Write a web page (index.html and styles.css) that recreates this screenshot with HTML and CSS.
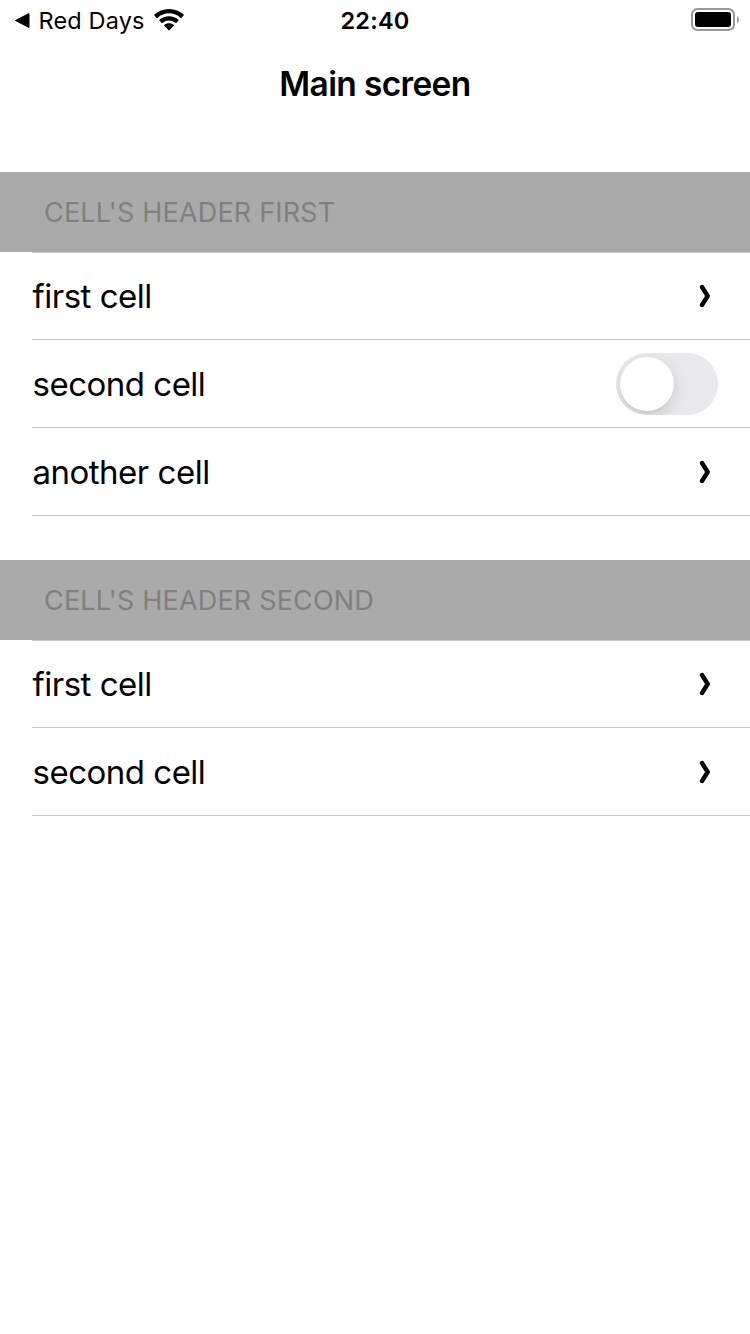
FILE: index.html
```html
<!DOCTYPE html>
<html lang="en">
<head>
<meta charset="utf-8">
<title>Main screen</title>
<link rel="stylesheet" href="styles.css">
</head>
<body>
<header class="status">
  <div class="status-left">
    <svg class="back" width="16" height="16" viewBox="0 0 16 16"><path d="M1.500 8.500 15 1.500v14z" stroke="#000" stroke-linejoin="round"/></svg>
    <span class="app">Red Days</span>
    <svg class="wifi" width="30" height="22" viewBox="0 0 30 22"><path d="M15 0C9.300 0 4.200 2.100 .4 5.600Q0 6 .4 6.400L2.600 8.900Q3 9.300 3.400 8.900A17 17 0 0 1 26.600 8.900Q27 9.300 27.400 8.900L29.600 6.400Q30 6 29.600 5.600C25.800 2.100 20.700 0 15 0zM15 7.200C11.400 7.200 8.100 8.500 5.500 10.700Q5.100 11.100 5.500 11.500L7.700 13.900Q8.100 14.300 8.500 13.900A10 10 0 0 1 21.500 13.900Q21.900 14.300 22.300 13.900L24.500 11.500Q24.900 11.100 24.500 10.700C21.900 8.500 18.600 7.200 15 7.200zM15 14.300C13.200 14.300 11.500 14.900 10.200 15.900Q9.800 16.300 10.200 16.700L14.600 21.300Q15 21.700 15.400 21.300L19.800 16.700Q20.200 16.300 19.800 15.900C18.500 14.900 16.800 14.300 15 14.300z"/></svg>
  </div>
  <span class="time">22:40</span>
  <div class="status-right">
    <svg width="48" height="24" viewBox="0 0 48 24"><rect x="1" y="1" width="42" height="21" rx="5.500" fill="none" stroke="#999" stroke-width="2"/><rect x="4" y="4" width="36" height="15" rx="3"/><path d="M46 8c2.600 1.400 2.600 6 0 7.400z" fill="#999"/></svg>
  </div>
</header>
<h1 class="title">Main screen</h1>
<main class="list">
  <section class="group">
    <h2 class="group-header">CELL'S HEADER FIRST</h2>
    <div class="cell"><span class="label">first cell</span><svg class="chevron" width="12" height="24" viewBox="0 0 12 24"><path d="M3 3 8.700 12 3 21"/></svg></div>
    <div class="cell"><span class="label">second cell</span><span class="switch"><span class="knob"></span></span></div>
    <div class="cell"><span class="label">another cell</span><svg class="chevron" width="12" height="24" viewBox="0 0 12 24"><path d="M3 3 8.700 12 3 21"/></svg></div>
  </section>
  <section class="group">
    <h2 class="group-header">CELL'S HEADER SECOND</h2>
    <div class="cell"><span class="label">first cell</span><svg class="chevron" width="12" height="24" viewBox="0 0 12 24"><path d="M3 3 8.700 12 3 21"/></svg></div>
    <div class="cell"><span class="label">second cell</span><svg class="chevron" width="12" height="24" viewBox="0 0 12 24"><path d="M3 3 8.700 12 3 21"/></svg></div>
  </section>
</main>
</body>
</html>
```
FILE: styles.css
```css
* { box-sizing: border-box; }
body { margin: 0; height: 1334px; background: #fff; color: #000; font-family: Inter, sans-serif; }
svg { display: block; flex: none; }
.status { display: grid; grid-template-columns: 1fr auto 1fr; align-items: center; height: 40px; padding: 0 11px 0 14px; }
.status-left { display: flex; align-items: center; }
.app { margin: 2px 9px 0 8.500px; font-size: 23.500px; line-height: 30px; letter-spacing: 0.15px; }
.time { padding: 2px 3px 0 0; font-size: 23.500px; font-weight: 600; line-height: 30px; letter-spacing: 0.2px; }
.status-right { display: flex; justify-content: flex-end; }
.title { height: 88px; margin: 0; font-size: 33.500px; font-weight: 600; line-height: 88px; text-align: center; letter-spacing: -0.65px; }
.list { display: flex; flex-direction: column; gap: 44px; padding-top: 44px; }
.group-header { height: 80px; margin: 0; padding: 1px 0 0 44px; background: #aaa; color: #808080; font-size: 27px; font-weight: 400; line-height: 80px; letter-spacing: 0.18px; }
.cell { display: flex; align-items: center; justify-content: space-between; height: 88px; margin-left: 32px; padding-right: 32px; border-bottom: 1px solid #c6c6c8; }
.group-header + .cell { border-top: 1px solid #c6c6c8; }
.label { padding: 1px 0 0 0.500px; font-size: 33px; line-height: 44px; letter-spacing: -0.5px; }
.group-header + .cell .label { padding-top: 0; }
.chevron { margin-right: 7px; fill: none; stroke: #000; stroke-width: 4.400; stroke-linecap: round; stroke-linejoin: round; }
.switch { display: flex; width: 102px; height: 62px; padding: 4px; border-radius: 31px; background: #e9e9eb; overflow: hidden; }
.knob { width: 54px; height: 54px; border-radius: 50%; background: #fff; box-shadow: 0 6px 16px rgba(0,0,0,.13), 0 2px 2px rgba(0,0,0,.04); }
```
